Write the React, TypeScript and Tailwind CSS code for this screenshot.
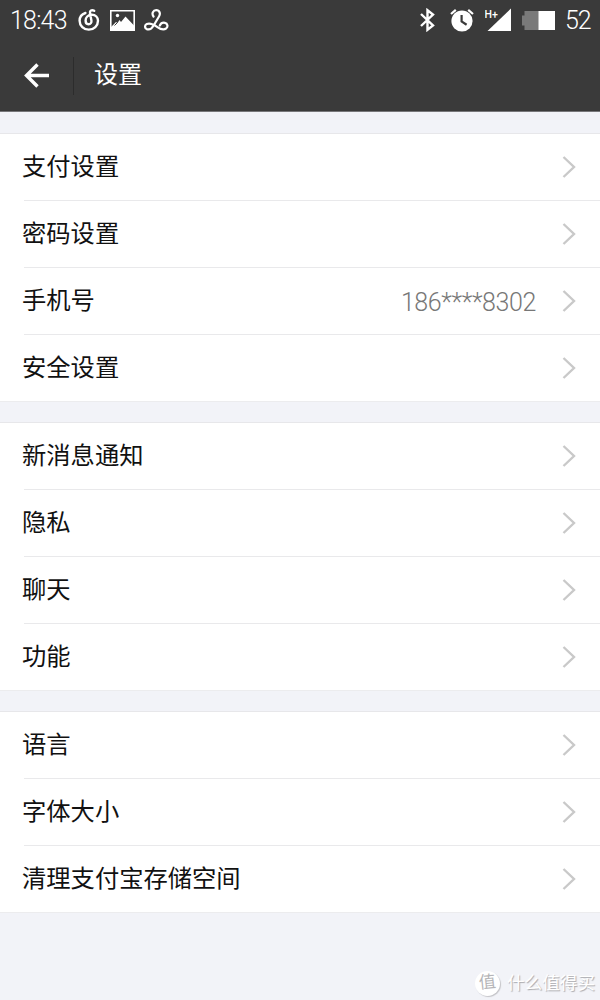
type Item = {
  label: string
  value?: string
}

const sections: Item[][] = [
  [
    { label: '支付设置' },
    { label: '密码设置' },
    { label: '手机号', value: '186****8302' },
    { label: '安全设置' },
  ],
  [{ label: '新消息通知' }, { label: '隐私' }, { label: '聊天' }, { label: '功能' }],
  [{ label: '语言' }, { label: '字体大小' }, { label: '清理支付宝存储空间' }],
]

const StatusBar = () => (
  <div className="flex h-10 items-center justify-between pl-[10px] pr-[10px] text-[25px] font-light text-white">
    <div className="flex items-center">
      <span className="w-[58px] whitespace-nowrap pt-px leading-[39px] tracking-[-0.8px]">18:43</span>
      {/* music */}
      <svg className="ml-[10px]" width="22" height="24" viewBox="0 0 22 24" fill="none" stroke="currentColor" strokeWidth="2.4" strokeLinecap="round">
        <path d="M7.4 5C3.8 6.200 1.600 9.200 1.600 12.800c0 4.900 4.100 8.800 9.200 8.800s9.200-3.900 9.200-8.800c0-3.300-2.400-6-6.200-6-3.800 0-6.200 2.700-6.200 5.700 0 2.200 1.200 3.700 2.900 3.700 2.100 0 3.300-1.600 2.900-3.700L12 5C11.600 2.800 13.600 1.300 16.200 2.800" />
      </svg>
      {/* gallery */}
      <svg className="ml-[10px]" width="25" height="21" viewBox="0 0 25 21">
        <path fill="none" stroke="currentColor" strokeWidth="1.6" d="M.8.8h23.4v19.4H.8z" />
        <circle cx="7.500" cy="5.500" r="1.700" fill="currentColor" />
        <path fill="currentColor" d="M1 20v-3l5-5 1.500 1 2-3 1.500 2 4.500-5.500L24 15.500V20z" />
        <path stroke="#3a3a3a" strokeWidth="1" d="m4.500 15.500 3-3" />
      </svg>
      {/* loop */}
      <svg className="ml-[9px]" width="25" height="22" viewBox="0 0 25 22" fill="none" stroke="currentColor" strokeWidth="2.2" strokeLinecap="round" strokeLinejoin="round">
        <path d="M9.5 7.5C7.3 4.5 9.2 1.2 12.2 1.2c3.4 0 4.6 3.3 2.8 6.3L9.5 16.8c-1.8 3-4.4 4.2-6.8 3.3-2.2-.9-2.2-4 .1-5 3.2-1.400 7 .5 10.600 3 3.400 2.400 6.500 3 8.700 1.400 2.200-1.700 1.600-5.200-1.200-5.700-2.300-.4-4.300.9-5.100 2.700" />
      </svg>
    </div>
    <div className="flex items-center">
      {/* bluetooth */}
      <svg width="15" height="24" viewBox="0 0 15 24" fill="none" stroke="currentColor" strokeWidth="2.400">
        <path d="m1 6 12 11.500-5.500 4.300V2.200L13 6.500 1 18" />
      </svg>
      {/* alarm */}
      <svg className="ml-[15px]" width="24" height="24" viewBox="0 0 24 24">
        <circle cx="12" cy="13" r="10.600" fill="currentColor" />
        <path fill="none" stroke="currentColor" strokeWidth="2.200" d="m1 6 4.800-4.200M23 6l-4.800-4.200" />
        <path fill="none" stroke="#3a3a3a" strokeWidth="2.200" d="M11.600 7v6.500l5 3.200" />
      </svg>
      {/* signal */}
      <svg className="ml-[11px]" width="27" height="24" viewBox="0 0 27 24" fill="currentColor">
        <path d="M26 .5v22.500H2.500z" />
        <text x="-.5" y="10" fontSize="10.500" fontWeight="500">H+</text>
      </svg>
      {/* battery */}
      <svg className="ml-[10px]" width="33" height="19" viewBox="0 0 33 19">
        <path fill="#7a7a7a" d="M2.500 0H17v19H2.500v-4.500H0v-10h2.500z" />
        <path fill="currentColor" d="M16.500 0H33v19H16.500z" />
      </svg>
      <span className="ml-[10px] w-[25px] pt-px text-[25px] leading-[39px] tracking-[-1px]">52</span>
    </div>
  </div>
)

const Row = ({ item, last }: { item: Item; last: boolean }) => (
  <div className={`h-[67px] ${last ? 'border-b border-[#ececee]' : ''}`}>
    <div className="flex h-full pl-[22px]">
      <span className="w-0 whitespace-nowrap text-[24.3px] leading-[66px] text-[#111]">{item.label}</span>
      <div className={`ml-[2px] flex flex-1 items-center justify-end pr-[24px] ${last ? '' : 'border-b border-[#e9e9eb]'}`}>
        {item.value && (
          <span className="mr-[25px] pt-[3px] text-[25px] font-light tracking-[-0.4px] text-[#777]">{item.value}</span>
        )}
        <svg width="15" height="24" viewBox="0 0 15 24" fill="none" stroke="#c9c9c9" strokeWidth="2.4">
          <path d="m2.5 2 10.5 10L2.5 22" />
        </svg>
      </div>
    </div>
  </div>
)

const App = () => {
  return (
    <div className="relative h-[1000px] w-[600px] overflow-hidden bg-[#f2f3f8] font-['Roboto','Noto_Sans_CJK_SC',sans-serif]">
      <header className="h-[112px] border-b border-[#77777a] bg-[#3a3a3a]">
        <StatusBar />
        <div className="flex h-[71px] items-center text-white">
          <svg className="ml-[24px]" width="26" height="26" viewBox="0 0 26 26" fill="none" stroke="currentColor" strokeWidth="3.4">
            <path d="M25 12.500H3M13.500 1.500l-11 11 11 11" />
          </svg>
          <div className="ml-[23px] h-[38px] w-px bg-[#2c2c2c]" />
          <h1 className="ml-[20px] pb-[2px] text-[24px] font-normal">设置</h1>
        </div>
      </header>

      <main className="mt-[21px] flex flex-col gap-5">
        {sections.map((items, i) => (
          <section key={i} className="border-t border-[#e7e7ea] bg-white">
            {items.map((item, j) => (
              <Row key={item.label} item={item} last={j === items.length - 1} />
            ))}
          </section>
        ))}
      </main>

      {/* watermark */}
      <div className="absolute bottom-[3px] right-[5px] flex items-center gap-[7px]">
        <span className="flex size-[25px] items-center justify-center rounded-full bg-white text-[17px] text-[#b5b5b8] shadow-[1px_1px_1px_#c4c4c8]">
          <span className="-rotate-6">值</span>
        </span>
        <span className="text-[17.6px] leading-[28px] text-white [text-shadow:1px_1px_1px_#a9a9ad]">什么值得买</span>
      </div>
    </div>
  )
}

export default App
